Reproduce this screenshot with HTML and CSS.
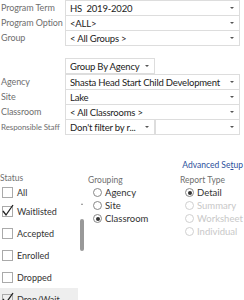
FILE: index.html
```html
<!DOCTYPE html>
<html lang="en">
<head>
    <meta charset="UTF-8">
    <title>Report Filters</title>
    <link rel="stylesheet" href="styles.css">
</head>
<body>
    <div class="filters">
        <div class="row">
            <span class="lbl">Program Term</span>
            <div class="combo"><span class="val">HS&nbsp; 2019-2020</span><i class="arr"></i></div>
        </div>
        <div class="row">
            <span class="lbl">Program Option</span>
            <div class="combo"><span class="val">&lt;ALL&gt;</span><i class="arr"></i></div>
        </div>
        <div class="row">
            <span class="lbl">Group</span>
            <div class="combo"><span class="val">&lt; All Groups &gt;</span><i class="arr"></i></div>
        </div>

        <div class="row group-by">
            <span class="lbl"></span>
            <div class="combo short"><span class="val">Group By Agency</span><i class="arr"></i></div>
        </div>

        <div class="row">
            <span class="lbl">Agency</span>
            <div class="combo"><span class="val">Shasta Head Start Child Development</span><i class="arr"></i></div>
        </div>
        <div class="row">
            <span class="lbl">Site</span>
            <div class="combo"><span class="val">Lake</span><i class="arr"></i></div>
        </div>
        <div class="row">
            <span class="lbl">Classroom</span>
            <div class="combo"><span class="val">&lt; All Classrooms &gt;</span><i class="arr"></i></div>
        </div>
        <div class="row">
            <span class="lbl small">Responsible Staff</span>
            <div class="combo short"><span class="val">Don't filter by r...</span><i class="arr"></i></div>
            <div class="combo"><span class="val"></span><i class="arr"></i></div>
        </div>
    </div>

    <div class="advanced"><a href="#">Advanced Se<u>t</u>up</a></div>

    <div class="options">
        <div class="status">
            <div class="head">Status</div>
            <label class="check all"><span class="box"></span>All</label>
            <div class="list">
                <div class="items">
                    <label class="check on"><span class="box"><svg viewBox="0 0 12 12"><path d="M1 6.5 L4 10.5 L11 0.5"/></svg></span>Waitlisted</label>
                    <label class="check"><span class="box"></span>Accepted</label>
                    <label class="check"><span class="box"></span>Enrolled</label>
                    <label class="check"><span class="box"></span>Dropped</label>
                    <label class="check on sel"><span class="box"><svg viewBox="0 0 12 12"><path d="M1 6.5 L4 10.5 L11 0.5"/></svg></span>Drop/Wait</label>
                </div>
                <div class="scroll">
                    <i class="up"></i>
                    <i class="thumb"></i>
                    <i class="down"></i>
                </div>
            </div>
        </div>

        <div class="grouping">
            <div class="head">Grouping</div>
            <label class="radio"><span class="dot"></span>Agency</label>
            <label class="radio"><span class="dot"></span>Site</label>
            <label class="radio on"><span class="dot"></span>Classroom</label>
        </div>

        <div class="report">
            <div class="head">Report Type</div>
            <label class="radio on"><span class="dot"></span>Detail</label>
            <label class="radio off"><span class="dot"></span>Summary</label>
            <label class="radio off"><span class="dot"></span>Worksheet</label>
            <label class="radio off"><span class="dot"></span>Individual</label>
        </div>
    </div>
</body>
</html>
```

FILE: styles.css
```css
body {
    margin: 0;
    width: 244px;
    height: 300px;
    overflow: hidden;
    background: #fff;
    font-family: Lato, "Open Sans", sans-serif;
    color: #333;
}
.filters {
    padding-right: 4px;
}
.row {
    display: flex;
    align-items: center;
    height: 15px;
}
.row.group-by {
    margin-top: 13px;
    margin-bottom: 1px;
}
.lbl {
    width: 64px;
    flex: none;
    padding-left: 1px;
    font-size: 9px;
    letter-spacing: -0.1px;
    color: #6f6f6f;
    white-space: nowrap;
}
.lbl.small {
    font-size: 8px;
}
.combo {
    flex: 1;
    display: flex;
    align-items: center;
    height: 16px;
    box-sizing: border-box;
    border: 1px solid #ddd;
    margin-bottom: -1px;
    padding: 0 5px 0 4px;
    min-width: 0;
}
.combo.short {
    flex: none;
    width: 90px;
}
.val {
    flex: 1;
    font-size: 9.5px;
    letter-spacing: -0.2px;
    color: #222;
    white-space: nowrap;
    overflow: hidden;
}
.arr {
    width: 0;
    height: 0;
    border-left: 2px solid transparent;
    border-right: 2px solid transparent;
    border-top: 2px solid #555;
}
.advanced {
    text-align: right;
    padding-right: 1px;
    margin-top: 25px;
    font-size: 8.5px;
    line-height: 12px;
}
.advanced a {
    color: #2b4f9c;
    text-decoration: none;
}
.options {
    display: flex;
    margin-top: 1px;
}
.head {
    font-size: 8.5px;
    color: #6f6f6f;
    height: 12px;
    line-height: 12px;
}
.status {
    width: 88px;
    flex: none;
}
.check {
    display: flex;
    align-items: center;
    height: 22px;
    font-size: 9px;
    color: #333;
    padding-left: 2px;
}
.check.all {
    height: 16px;
}
.check .box {
    position: relative;
    width: 9px;
    height: 9px;
    border: 1px solid #aaa;
    margin-right: 4px;
}
.check .box svg {
    position: absolute;
    left: -1px;
    top: -3px;
    width: 12px;
    height: 13px;
    fill: none;
    stroke: #222;
    stroke-width: 1.3;
}
.check.sel {
    background: #eee;
}
.list {
    display: flex;
    height: 110px;
}
.items {
    width: 78px;
}
.scroll {
    width: 8px;
    display: flex;
    flex-direction: column;
    align-items: center;
}
.scroll .up,
.scroll .down {
    width: 0;
    height: 0;
    border-left: 1.5px solid transparent;
    border-right: 1.5px solid transparent;
}
.scroll .up {
    margin-top: 3px;
    border-bottom: 2px solid #888;
}
.scroll .down {
    margin-top: auto;
    border-top: 2px solid #888;
}
.scroll .thumb {
    width: 4px;
    height: 32px;
    margin-top: 14px;
    background: #999;
    border-radius: 2px;
}
.grouping {
    width: 92px;
    flex: none;
    padding-top: 2px;
}
.report {
    flex: 1;
    padding-top: 2px;
}
.radio {
    display: flex;
    align-items: center;
    height: 13px;
    font-size: 9.5px;
    color: #333;
    padding-left: 5px;
}
.radio .dot {
    position: relative;
    width: 7px;
    height: 7px;
    border: 1px solid #888;
    border-radius: 50%;
    margin-right: 3px;
}
.radio.on .dot::after {
    content: "";
    position: absolute;
    left: 1.5px;
    top: 1.5px;
    width: 4px;
    height: 4px;
    border-radius: 50%;
    background: #333;
}
.radio.off {
    color: #c8c8c8;
}
.radio.off .dot {
    border-color: #d0d0d0;
}
```
